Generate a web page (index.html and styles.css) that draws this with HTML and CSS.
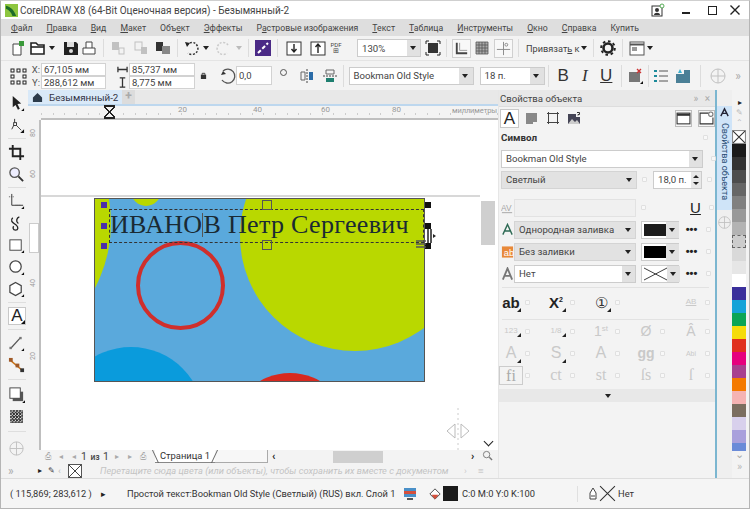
FILE: index.html
```html
<!DOCTYPE html>
<html lang="ru">
<head>
<meta charset="utf-8">
<title>CorelDRAW X8</title>
<link rel="stylesheet" href="styles.css">
</head>
<body>
<div class="app">
  <header class="titlebar">
    <svg class="logo" viewBox="0 0 14 14"><rect width="14" height="14" fill="#8dc63f"/><path d="M1 2C6 3 10 7 12 13L8 13C7 9 4 6 1 5Z" fill="#1d6b2a"/></svg>
    <span class="title">CorelDRAW X8 (64-Bit Оценочная версия) - Безымянный-2</span>
    <div class="winbtns">
      <svg class="w14" viewBox="0 0 14 14"><rect x="1" y="3" width="10" height="10" fill="none" stroke="#333"/><circle cx="6" cy="7" r="2" fill="#333"/><path d="M3 12c0-3 6-3 6 0z" fill="#333"/><circle cx="11" cy="3" r="2" fill="#fff" stroke="#5a5"/></svg>
      <span class="wmin"></span>
      <span class="wmax"></span>
      <svg class="wclose" viewBox="0 0 10 10"><path d="M0.5 0.5L9.5 9.5M9.5 0.5L0.5 9.5" stroke="#222" stroke-width="1.4"/></svg>
    </div>
  </header>

  <nav class="menubar">
    <span><u>Ф</u>айл</span><span><u>П</u>равка</span><span><u>В</u>ид</span><span><u>М</u>акет</span><span>Объ<u>е</u>кт</span><span><u>Э</u>ффекты</span><span>Р<u>а</u>стровые изображения</span><span><u>Т</u>екст</span><span><u>Т</u>аблица</span><span><u>И</u>нструменты</span><span><u>О</u>кно</span><span><u>С</u>правка</span><span>Купить</span>
  </nav>

  <div class="toolbar">
    <svg class="ic" viewBox="0 0 18 18"><path d="M4 16V5h8v11z" fill="#fff" stroke="#444"/><rect x="10" y="2" width="5" height="5" fill="#3a9a3a"/></svg>
    <svg class="ic m2" viewBox="0 0 18 18"><path d="M2 15V4h5l2 2h6v9z" fill="#fff" stroke="#222" stroke-width="1.6"/><path d="M2 8h13" stroke="#222" stroke-width="1.6"/></svg>
    <span class="arr"></span>
    <svg class="ic m6" viewBox="0 0 18 18"><path d="M2 3h12l2 2v11H2z" fill="#222"/><rect x="5" y="3" width="7" height="5" fill="#ddd"/><circle cx="9" cy="12" r="2" fill="#ddd"/></svg>
    <svg class="ic" viewBox="0 0 18 18"><path d="M6 9V3h6v6M3 9h12v6H3z" fill="#fff" stroke="#444"/></svg>
    <i class="sep s12"></i>
    <svg class="ic faded" viewBox="0 0 18 18"><rect x="3" y="3" width="7" height="8" fill="#999"/><rect x="10" y="9" width="5" height="6" fill="none" stroke="#999"/></svg>
    <svg class="ic faded m5" viewBox="0 0 18 18"><rect x="3" y="3" width="7" height="8" fill="none" stroke="#999"/><rect x="9" y="8" width="6" height="7" fill="#999"/></svg>
    <svg class="ic m4" viewBox="0 0 18 18"><rect x="2" y="3" width="7" height="9" fill="#333"/><rect x="8" y="7" width="8" height="8" fill="#888"/></svg>
    <i class="sep s7"></i>
    <svg class="ic" viewBox="0 0 18 18"><path d="M4 6a6 6 0 1 1 1 8" fill="none" stroke="#333" stroke-width="1.5" stroke-dasharray="2 1.5"/><path d="M2 3l5 1-3 4z" fill="#222"/></svg>
    <span class="arr m2"></span>
    <svg class="ic faded m4" viewBox="0 0 18 18"><path d="M14 6a6 6 0 1 0-1 8" fill="none" stroke="#aaa" stroke-width="1.5" stroke-dasharray="2 1.5"/></svg>
    <span class="arr m4 lite"></span>
    <i class="sep s7"></i>
    <svg class="ic" viewBox="0 0 18 18"><rect x="1" y="1" width="16" height="16" fill="#4a2a86"/><path d="M4 14L14 4" stroke="#fff" stroke-width="2" stroke-dasharray="4 2"/></svg>
    <i class="sep s7"></i>
    <svg class="ic m2" viewBox="0 0 18 18"><rect x="2" y="3" width="14" height="13" fill="#fff" stroke="#333"/><path d="M9 5v8M6.5 10L9 13l2.5-3" fill="none" stroke="#222" stroke-width="1.4"/></svg>
    <svg class="ic m6" viewBox="0 0 18 18"><rect x="2" y="3" width="14" height="13" fill="#fff" stroke="#333"/><path d="M9 14V6M6.5 8L9 5l2.5 3" fill="none" stroke="#222" stroke-width="1.4"/></svg>
    <span class="pdf m3">PDF<b>⊞</b></span>
    <div class="combo zoomc"><span>130%</span><span class="drop"></span></div>
    <svg class="ic m3" viewBox="0 0 18 18"><path d="M2 5V2h3M13 2h3v3M16 13v3h-3M5 16H2v-3" fill="none" stroke="#222"/><rect x="4" y="4" width="10" height="10" fill="#333"/></svg>
    <i class="sep snapl"></i>
    <span class="tbox"><svg viewBox="0 0 18 18"><path d="M4 3v11h11" fill="none" stroke="#444" stroke-width="2"/><path d="M7 3v8h8" fill="none" stroke="#999"/></svg></span>
    <svg class="ic m2" viewBox="0 0 18 18"><path d="M3 3h12v12H3zM3 6h12M3 9h12M3 12h12M6 3v12M9 3v12M12 3v12" fill="#aaa" stroke="#555" stroke-width=".8"/></svg>
    <span class="tbox m3"><svg viewBox="0 0 18 18"><path d="M9 2v14M2 10h14" stroke="#888"/><circle cx="12" cy="5" r="1.5" fill="none" stroke="#888"/></svg></span>
    <i class="sep s5"></i>
    <span class="snap">Привязат<u>ь</u> к</span>
    <span class="arr m1"></span>
    <i class="sep snapr"></i>
    <svg class="ic" viewBox="0 0 18 18"><circle cx="9" cy="9" r="4.5" fill="none" stroke="#222" stroke-width="2.6"/><circle cx="9" cy="9" r="6.8" fill="none" stroke="#222" stroke-width="2" stroke-dasharray="2.6 2.7"/></svg>
    <i class="sep s5"></i>
    <svg class="ic" viewBox="0 0 18 18"><rect x="2" y="3" width="14" height="13" fill="#fff" stroke="#555"/><path d="M2 5.5h14" stroke="#555" stroke-width="2"/><rect x="4" y="8" width="5" height="4" fill="#999"/></svg>
    <span class="arr m1"></span>
  </div>

  <div class="propbar">
    <svg class="ic" viewBox="0 0 18 18"><g fill="#fff" stroke="#222"><rect x="2" y="2" width="3" height="3"/><rect x="8" y="2" width="3" height="3"/><rect x="14" y="2" width="3" height="3"/><rect x="2" y="8" width="3" height="3"/><rect x="14" y="8" width="3" height="3"/><rect x="2" y="14" width="3" height="3"/><rect x="8" y="14" width="3" height="3"/><rect x="14" y="14" width="3" height="3"/></g></svg>
    <div class="xy"><div class="xyrow"><label>X:</label><span class="field">67,105 мм</span></div><div class="xyrow"><label>Y:</label><span class="field">288,612 мм</span></div></div>
    <div class="wh"><div class="xyrow"><svg class="mini" viewBox="0 0 12 12"><path d="M1 6h10M1 3v6M11 3v6" stroke="#333" stroke-width="1.4"/></svg><span class="field">85,737 мм</span></div><div class="xyrow"><svg class="mini" viewBox="0 0 12 12"><path d="M6 1v10M3 1h6M3 11h6" stroke="#333" stroke-width="1.4"/></svg><span class="field">8,775 мм</span></div></div>
    <svg class="lock" viewBox="0 0 8 8"><rect x="1" y="3" width="6" height="5" fill="#333"/><path d="M2.5 3V1.5h3V3" fill="none" stroke="#333"/></svg>
    <svg class="ic rot" viewBox="0 0 18 18"><path d="M5 4a7 7 0 1 1-1 9" fill="none" stroke="#555" stroke-width="1.3"/><path d="M3 8l5-1-3-3z" fill="#333"/></svg>
    <span class="field angle">0,0</span>
    <span class="deg"></span>
    <svg class="ic mir1" viewBox="0 0 18 18"><path d="M9 2v14" stroke="#444" stroke-dasharray="2 1"/><path d="M7 5H3v8h4z" fill="none" stroke="#666"/><path d="M11 5h4v8h-4z" fill="#2b6ca8"/></svg>
    <svg class="ic m5" viewBox="0 0 18 18"><path d="M2 9h14" stroke="#444" stroke-dasharray="2 1"/><path d="M5 7V3h8v4z" fill="none" stroke="#666"/><path d="M5 11v4h8v-4z" fill="#1f7f70"/></svg>
    <i class="sep s45 tall"></i>
    <div class="combo fontc"><span>Bookman Old Style</span><span class="drop"></span></div>
    <div class="combo sizec"><span>18 п.</span><span class="drop"></span></div>
    <i class="sep sbig tall"></i>
    <span class="big">B</span><span class="big it">I</span><span class="big un">U</span>
    <i class="sep s4 tall"></i>
    <svg class="ic" viewBox="0 0 18 18"><rect x="3" y="5" width="11" height="10" fill="#777"/><path d="M11 2l4 4M15 2l-4 4" stroke="#c33" stroke-width="1.3"/><path d="M17 17l-3 0 3-3z" fill="#111"/></svg>
    <i class="sep s35 tall"></i>
    <svg class="ic" viewBox="0 0 18 18"><path d="M7 4h9M7 9h9M7 14h9" stroke="#555"/><path d="M2 4h3M2 9h3M2 14h3" stroke="#1b8a9a" stroke-width="2"/></svg>
    <svg class="ic m4" viewBox="0 0 18 18"><rect x="2" y="7" width="14" height="9" fill="#4a7f96"/><rect x="10" y="3" width="6" height="5" fill="#4a7f96"/><path d="M4 6l2-4 2 4" fill="#3ab0d0"/></svg>
    <i class="sep s8 tall"></i>
    <svg class="ic faded" viewBox="0 0 18 18"><circle cx="9" cy="9" r="7" fill="none" stroke="#999"/><path d="M9 2v14M2 9h14" stroke="#999"/></svg>
    <span class="more">»</span>
  </div>

  <div class="main">
    <aside class="toolbox">
      <svg class="tool" viewBox="0 0 18 18"><path d="M5 1l9 8-4 .5 2.5 5-2 1-2.5-5L5 13z" fill="#222"/><path d="M17 17h-3l3-3z" fill="#111"/></svg>
      <svg class="tool" viewBox="0 0 18 18"><path d="M7 2v5l-3 6" fill="none" stroke="#333"/><rect x="6" y="6" width="3" height="3" fill="#fff" stroke="#333"/><path d="M9 9l5 5" stroke="#444"/><path d="M17 17h-4l4-4z" fill="#111"/></svg>
      <i class="hr"></i>
      <svg class="tool" viewBox="0 0 18 18"><path d="M5 1v12h12M1 5h12v12" fill="none" stroke="#222" stroke-width="2"/></svg>
      <svg class="tool" viewBox="0 0 18 18"><circle cx="7" cy="7" r="5" fill="#eef" stroke="#555" stroke-width="1.4"/><path d="M11 11l5 5" stroke="#333" stroke-width="2"/></svg>
      <i class="hr"></i>
      <svg class="tool" viewBox="0 0 18 18"><path d="M4 1v12h12" fill="none" stroke="#333"/><path d="M1 4h6M8 13h6" stroke="#555" stroke-dasharray="1 1"/><path d="M17 17h-3l3-3z" fill="#111"/></svg>
      <svg class="tool" viewBox="0 0 18 18"><path d="M5 3c-4 4 2 6 4 8s2 5-1 5-3-3-2-4M12 2c-3 1-4 5-1 7" fill="none" stroke="#222" stroke-width="1.4"/></svg>
      <svg class="tool" viewBox="0 0 18 18"><rect x="2" y="3" width="12" height="11" fill="#fff" stroke="#444"/><path d="M17 17h-3l3-3z" fill="#111"/></svg>
      <svg class="tool" viewBox="0 0 18 18"><circle cx="8" cy="8" r="6" fill="#fff" stroke="#444" stroke-width="1.3"/><path d="M17 17h-3l3-3z" fill="#111"/></svg>
      <svg class="tool" viewBox="0 0 18 18"><path d="M8 1.5l6 3.5v7l-6 3.5-6-3.5V5z" fill="#fff" stroke="#444" stroke-width="1.3"/><path d="M17 17h-3l3-3z" fill="#111"/></svg>
      <i class="hr"></i>
      <span class="tool sel">A<svg class="corner" viewBox="0 0 4 4"><path d="M4 4H0l4-4z" fill="#111"/></svg></span>
      <i class="hr"></i>
      <svg class="tool" viewBox="0 0 18 18"><path d="M3 14L13 3" stroke="#555" stroke-width="1.3"/><rect x="1.500" y="12.500" width="2.500" height="2.500" fill="#777"/><rect x="12" y="2" width="2.500" height="2.500" fill="#777"/><path d="M17 17h-3l3-3z" fill="#111"/></svg>
      <svg class="tool" viewBox="0 0 18 18"><path d="M2 3l13 11" stroke="#c8741a" stroke-width="1.6"/><rect x="1" y="1" width="4" height="4" fill="#a05a28"/><rect x="8" y="7" width="4" height="4" fill="#a05a28"/><rect x="13" y="12" width="4" height="4" fill="#333"/></svg>
      <i class="hr wide-hr"></i>
      <svg class="tool" viewBox="0 0 18 18"><rect x="5" y="6" width="11" height="10" fill="#555"/><rect x="2" y="2" width="11" height="11" fill="#fff" stroke="#444"/><path d="M18 18h-3l3-3z" fill="#111"/></svg>
      <svg class="tool" viewBox="0 0 16 16"><rect x="2" y="2" width="12" height="12" fill="#333"/><path d="M2 4h12M2 7h12M2 10h12M2 13h12M4 2v12M7 2v12M10 2v12M13 2v12" stroke="#ddd" stroke-dasharray="1.500 1.500"/></svg>
      <i class="hr gapt"></i>
      <svg class="tool faded addt" viewBox="0 0 18 18"><circle cx="9" cy="9" r="7" fill="none" stroke="#999"/><path d="M9 2v14M2 9h14" stroke="#999"/></svg>
      <span class="more left">»</span>
    </aside>

    <section class="work">
      <div class="tabs">
        <span class="tab"><svg class="home" viewBox="0 0 12 12"><path d="M6 1l5 5v5H1V6z" fill="#2b3a4a"/></svg>Безымянный-2</span>
        <span class="tabadd">+</span>
      </div>
      <div class="rulertop">
        <span class="corner-r"></span>
        <div class="hruler">
          <span class="mark hour"></span>
          <span class="rnum n1">20</span><span class="rnum n2">40</span><span class="rnum n3">60</span><span class="rnum n4">80</span><span class="units">миллиметры</span>
        </div>
      </div>
      <div class="stage">
        <div class="vruler"><span class="vnum v1">80</span><span class="vnum v2">60</span><span class="vnum v3">40</span><span class="vnum v4">20</span><span class="vthumb"></span></div>
        <div class="canvas">
          <i class="guide"></i>
          <div class="page">
            <i class="c lime-big"></i><i class="c lime-left"></i><i class="c lime-small"></i><i class="c ring"></i><i class="c blue"></i><i class="c red"></i>
          </div>
          <div class="frame"><span class="fio">ИВАНО<span class="caret"></span>В Петр Сергеевич</span></div>
          <i class="h p1"></i><i class="h p2"></i><i class="h p3"></i>
          <i class="h k1"></i><i class="h k2"></i><i class="h k3"></i>
          <i class="h o1"></i><i class="h o2"></i>
          <svg class="cur" viewBox="0 0 20 20"><path d="M0 12h10M0 15h10M0 18h10" stroke="#555" stroke-width="1.500"/><path d="M12 0v14M15 0v14" stroke="#222" stroke-width="1.500"/><path d="M17 5l3 2-3 2z" fill="#222"/></svg>
          <svg class="hint" viewBox="0 0 26 46"><path d="M13 0v46" stroke="#ccc" stroke-dasharray="2 3"/><path d="M10 16l-8 7 8 7zM16 16l8 7-8 7z" fill="#fff" stroke="#bbb"/></svg>
          <div class="vscroll"><span class="vsth"></span><span class="vsdown"></span></div>
        </div>
      </div>
      <div class="pagenav">
        <div class="nav">
          <span class="nv">⎙</span><span class="nv">◂</span><span class="nv">◂</span><span class="num">1</span><span class="iz">из</span><span class="num">1</span><span class="nv">▸</span><span class="nv">▸</span><span class="nv">⎙</span>
        </div>
        <span class="pagetab">Страница 1</span>
        <span class="blanktab"></span>
        <span class="hsl">‹</span>
        <span class="hsth"></span>
        <span class="hsr">›</span>
        <svg class="zm" viewBox="0 0 12 12"><circle cx="5" cy="5" r="3.500" fill="none" stroke="#777"/><path d="M8 8l3 3" stroke="#777" stroke-width="1.500"/></svg>
      </div>
      <div class="colorstrip">
        <span class="cs-ar">▸</span><span class="cs-pen">✎</span><span class="cs-l">‹</span>
        <svg class="nofill" viewBox="0 0 14 14"><rect x=".5" y=".5" width="13" height="13" fill="#fff" stroke="#555"/><path d="M1 1l12 12M13 1L1 13" stroke="#444"/></svg>
        <em>Перетащите сюда цвета (или объекты), чтобы сохранить их вместе с документом</em>
        <span class="cs-r">›</span><span class="cs-s">≡</span>
      </div>
    </section>

    <section class="docker">
      <div class="dhead"><span>Свойства объекта</span><span class="dctrl">» ×</span></div>
      <div class="dtabs">
        <span class="dt on">A</span>
        <svg class="dti" viewBox="0 0 14 14"><path d="M1 2h11v9H8v2H1z" fill="#888"/></svg>
        <svg class="dti" viewBox="0 0 14 14"><path d="M2.500 1v12M11.500 1v12M1 2.500h12M1 11.500h12" stroke="#444"/></svg>
        <svg class="dti" viewBox="0 0 14 14"><rect x="1" y="3" width="12" height="10" fill="#445"/><path d="M1 13l4-5 3 3 2-2 3 4z" fill="#ccc"/><rect x="9" y="0" width="5" height="6" fill="#f2f2f2"/><path d="M10 1.500h2.500v2H11v1" fill="none" stroke="#333"/></svg>
        <span class="spacer"></span>
        <span class="dbox"><svg viewBox="0 0 14 14"><rect x="1" y="2" width="12" height="10" fill="#fff" stroke="#333"/><path d="M1 3.500h12" stroke="#333" stroke-width="2"/></svg></span>
        <span class="dbox"><svg viewBox="0 0 14 14"><path d="M9 2H1v10h12V6" fill="#fff" stroke="#333"/><circle cx="11" cy="3" r="2" fill="#fff" stroke="#777"/></svg></span>
      </div>
      <div class="dsec"><b>Символ</b><i class="chk"></i></div>
      <div class="drow first">
        <div class="combo wide"><span>Bookman Old Style</span><span class="drop"></span></div><i class="chk"></i>
      </div>
      <div class="drow">
        <div class="combo flat w136"><span>Светлый</span><span class="drop pl"></span></div><i class="chk"></i>
        <div class="combo w50"><span>18,0 п.</span><span class="spin"></span></div><i class="chk"></i>
      </div>
      <div class="drow kern">
        <svg class="lead faded" viewBox="0 0 14 14"><text x="0" y="10" font-size="9" font-family="Liberation Sans" fill="#666">AV</text><path d="M1 12h11" stroke="#666"/></svg>
        <div class="combo dis w121"></div><i class="chk"></i>
        <span class="under"><u>U</u></span><i class="chk"></i>
      </div>
      <div class="drow fillr">
        <svg class="lead" viewBox="0 0 14 14"><path d="M2 12L7 1l5 11M4 8h6" fill="none" stroke="#2f6b55" stroke-width="1.500"/></svg>
        <div class="combo flat w121"><span>Однородная заливка</span><span class="drop pl"></span></div>
        <div class="swb"><i class="blk"></i><span class="drop"></span></div><span class="dots">•••</span><i class="chk"></i>
      </div>
      <div class="drow fillr">
        <svg class="lead" viewBox="0 0 14 14"><rect x="1" y="1" width="12" height="12" fill="#e8893a"/><text x="3" y="11" font-size="10" font-family="Liberation Sans" fill="#fff">ab</text></svg>
        <div class="combo flat w121"><span>Без заливки</span><span class="drop pl"></span></div>
        <div class="swb"><i class="blk k"></i><span class="drop"></span></div><span class="dots">•••</span><i class="chk"></i>
      </div>
      <div class="drow fillr">
        <svg class="lead" viewBox="0 0 14 14"><path d="M2 13L7 1l5 12M4 9h6" fill="none" stroke="#777" stroke-width="2"/></svg>
        <div class="combo w121"><span>Нет</span><span class="drop"></span></div>
        <div class="swb"><svg class="nox" viewBox="0 0 26 14" preserveAspectRatio="none"><path d="M0 1l26 12M26 1L0 13" stroke="#333"/></svg><span class="drop"></span></div><span class="dots">•••</span><i class="chk"></i>
      </div>
      <i class="dhr"></i>
      <div class="grow one">
        <span class="g dark ab">ab<s class="cn"></s></span><i class="chk"></i>
        <span class="g dark x2">X<sup>2</sup><s class="cn"></s></span><i class="chk"></i>
        <span class="g circ">①<s class="cn"></s></span><i class="chk"></i>
        <span class="g"></span><i class="nochk"></i>
        <span class="g lt sm"><u>AB</u></span><i class="chk"></i>
      </div>
      <i class="dhr"></i>
      <div class="grow">
        <span class="g lt sm">123<s class="cn"></s></span><i class="chk"></i>
        <span class="g lt sm">1/8<s class="cn"></s></span><i class="chk"></i>
        <span class="g lt">1<sup>st</sup></span><i class="chk"></i>
        <span class="g lt">Ø</span><i class="chk"></i>
        <span class="g lt">Â</span><i class="chk"></i>
      </div>
      <div class="grow">
        <span class="g lt bigg">A<s class="cn"></s></span><i class="chk"></i>
        <span class="g lt bigg">S<s class="cn"></s></span><i class="chk"></i>
        <span class="g lt bigg mir">A</span><i class="chk"></i>
        <span class="g lt bold">gg</span><i class="chk"></i>
        <span class="g lt xs">Abi</span><i class="chk"></i>
      </div>
      <div class="grow">
        <span class="g lt lig boxed">fi</span><i class="chk"></i>
        <span class="g lt lig">ct</span><i class="chk"></i>
        <span class="g lt lig">st</span><i class="chk"></i>
        <span class="g lt lig">ſs</span><i class="chk"></i>
        <span class="g lt lig">ſ</span><i class="chk"></i>
      </div>
      <div class="dmore"><span class="arr"></span></div>
    </section>

    <div class="sidetab">
      <span class="vtab"><svg class="vico" viewBox="0 0 12 12"><path d="M2 10l4-8 4 8M4 7h4" fill="none" stroke="#223" stroke-width="1.500"/></svg><span class="vtxt">Свойства объекта</span></span>
      <svg class="addv faded" viewBox="0 0 18 18"><circle cx="9" cy="9" r="7" fill="none" stroke="#999"/><path d="M9 2v14M2 9h14" stroke="#999"/></svg>
    </div>

    <div class="palette">
      <span class="pal-a">▸</span><span class="pal-b">✎</span><span class="pal-c">⌃</span>
      <svg class="pal-x" viewBox="0 0 13 13"><rect x=".5" y=".5" width="12" height="12" fill="#fff" stroke="#888"/><path d="M1 1l11 11M12 1L1 12" stroke="#333"/></svg>
      <div class="swatches">
        <i class="sw s1"></i><i class="sw s2"></i><i class="sw s3"></i><i class="sw s4x"></i><i class="sw s5x"></i><i class="sw s6x"></i><i class="sw s7x"></i><i class="sw s8x"></i><i class="sw s9x"></i><i class="sw s10x"></i><i class="sw s11x"></i><i class="sw s12x"></i><i class="sw s13x"></i><i class="sw s14x"></i><i class="sw s15x"></i><i class="sw s16x"></i><i class="sw s17x"></i><i class="sw s18x"></i><i class="sw s19x"></i><i class="sw s20x"></i><i class="sw s21x"></i><i class="sw s22x"></i><i class="sw s23x"></i><i class="sw s24x"></i>
      </div>
      <span class="pal-d">⌄</span><span class="pal-e">»</span>
    </div>
  </div>

  <footer class="status">
    <span class="st-coord">( 115,869; 283,612 )</span>
    <span class="st-ar">▸</span>
    <span class="st-txt">Простой текст:Bookman Old Style (Светлый) (RUS) вкл. Слой 1</span>
    <svg class="st-mon" viewBox="0 0 14 14"><rect x="1" y="1" width="12" height="9" fill="#4a90c8"/><rect x="1" y="4" width="12" height="3" fill="#d6503c"/><path d="M4 12h6" stroke="#555" stroke-width="2"/></svg>
    <svg class="st-fill" viewBox="0 0 14 14"><path d="M7 1l6 6-6 6-6-6z" fill="#fff" stroke="#333"/><path d="M3 8h8l-4 5z" fill="#d6503c"/></svg>
    <i class="st-sw"></i>
    <span class="st-cmyk">C:0 M:0 Y:0 K:100</span>
    <i class="st-sep"></i>
    <svg class="st-pen" viewBox="0 0 8 14"><path d="M4 1l3 5v6H1V6z" fill="#fff" stroke="#444"/><path d="M2 9h4" stroke="#444"/></svg>
    <svg class="st-x" viewBox="0 0 16 16"><path d="M1 1l14 14M15 1L1 15" stroke="#333"/></svg>
    <span class="st-none">Нет</span>
  </footer>
</div>
</body>
</html>
```
FILE: styles.css
```css
*{box-sizing:border-box}
html,body{margin:0;height:100%;overflow:hidden}
body{width:750px;height:509px;font-family:Roboto,"Open Sans",sans-serif;font-size:9.500px;color:#333;background:#f3f3f3}
i,s,em{font-style:normal;text-decoration:none}
.app{width:750px;height:509px;display:flex;flex-direction:column;border:1px solid #b5b5b5;border-top-color:#cfcfcf}

.titlebar{height:18px;display:flex;align-items:center;background:#fff;padding-left:4px;flex:none}
.logo{width:13px;height:13px;margin-right:2px}
.title{font-size:10px;color:#444;white-space:nowrap}
.winbtns{margin-left:auto;display:flex;align-items:center;height:18px}
.w14{width:14px;height:14px}
.wmin{width:8px;height:2px;background:#222;margin:6px 0 0 17px}
.wmax{width:9px;height:9px;border:1.500px solid #222;margin-left:18px}
.wclose{width:10px;height:10px;margin:0 9px 0 13px}

.menubar{height:17px;background:#dedede;display:flex;align-items:center;padding-left:10px;gap:14px;font-size:8.700px;color:#444;flex:none;white-space:nowrap}

.toolbar{height:24px;background:#f3f3f3;display:flex;align-items:center;padding-left:8px;flex:none;white-space:nowrap}
.propbar{height:30px;background:#f3f3f3;display:flex;align-items:center;padding-left:8px;flex:none;border-top:1px solid #e4e4e4;white-space:nowrap;overflow:hidden}
.ic{width:18px;height:18px;flex:none}
.faded{opacity:.55}
.arr{width:0;height:0;border-left:3.500px solid transparent;border-right:3.500px solid transparent;border-top:4px solid #222;margin-left:2px;margin-right:1px;flex:none}
.arr.lite{border-top-color:#bbb}
.m1{margin-left:1px}.m2{margin-left:2px}.m3{margin-left:3px}.m4{margin-left:4px}.m5{margin-left:5px}.m6{margin-left:6px}
.sep{width:1px;height:18px;background:#dcdcdc;flex:none}
.sep.tall{height:22px}
.s4{margin:0 4px}.s5{margin:0 5px}.s7{margin:0 5px}.s8{margin:0 8px}.s12{margin:0 5px}.s35{margin:0 3.500px}.s45{margin:0 4.500px}
.sbig{margin:0 4px 0 3px}
.snapl{margin:0 5px 0 4px}.snapr{margin:0 5px}
.pdf{font-size:6px;line-height:7px;width:12px;text-align:center;color:#444;flex:none;display:flex;flex-direction:column;align-items:center;margin-right:15px}
.pdf b{font-size:7px;font-weight:400}
.combo{display:flex;align-items:center;background:#fff;border:1px solid #ccc;height:17px;font-size:9.600px;color:#444;padding-left:4px;position:relative;flex:none}
.drop{margin-left:auto;width:13px;height:100%;background:#e1e1e1;position:relative;flex:none}
.drop::after{content:"";position:absolute;left:3px;top:6px;border-left:3.500px solid transparent;border-right:3.500px solid transparent;border-top:4px solid #222}
.drop.pl{background:transparent}
.zoomc{width:64px;height:18px}
.tbox{width:19px;height:19px;border:1px solid #d0d0d0;background:#f8f8f8;display:block;flex:none}
.tbox svg{width:17px;height:17px;display:block}
.snap{font-size:9.200px;color:#444;width:54px;margin-left:2px;flex:none}

.xy{width:75px;margin-left:4px;flex:none}
.wh{width:78px;margin-left:11px;flex:none}
.xyrow{display:flex;align-items:center;height:13px;gap:1px;font-size:9.500px;color:#555}
.xyrow label{width:9px;text-align:right;flex:none}
.mini{width:11px;height:11px;flex:none}
.field{flex:1;background:#fff;border:1px solid #d2d2d2;height:13px;line-height:11px;padding-left:2px;font-size:9.500px;color:#444;display:block}
.lock{width:7px;height:7px;margin-left:4.500px;flex:none}
.rot{margin-left:11.500px}
.angle{flex:none;width:36px;height:19px;line-height:17px}
.deg{width:7px;height:7px;border:1px solid #555;border-radius:50%;margin:0 0 6px 8px;flex:none}
.mir1{margin-left:10.500px}
.fontc{width:125px;height:18px}
.sizec{width:65px;height:18px;margin-left:6px}
.sizec .drop,.fontc .drop{width:14px}
.big{font:400 17px/1 "Liberation Sans",sans-serif;color:#333;width:21.500px;text-align:center;flex:none}
.it{font-style:italic;font-family:"Liberation Serif",serif}
.un{text-decoration:underline;text-decoration-thickness:1px}
.more{width:14px;text-align:center;color:#aaa;font-size:12px;margin-left:4px;flex:none}

.main{flex:1;display:flex;min-height:0;position:relative}
.toolbox{width:27px;flex:none;padding-left:7px;display:flex;flex-direction:column;align-items:flex-start;background:#f3f3f3}
.tool{width:17px;height:17px;margin-top:5px;flex:none;display:block}
.hr{width:18px;height:1px;background:#dedede;margin-top:4px;flex:none}
.wide-hr{margin-top:5px;margin-bottom:1px}
.gapt{margin-top:6px}
.tool.sel{width:18px;height:18px;border:1px solid #c8c8c8;background:#fff;font:400 17px/16px "Liberation Sans",sans-serif;text-align:center;color:#222;position:relative;margin-top:4px}
.corner{position:absolute;right:0;bottom:0;width:4px;height:4px}
.tool.addt{margin-top:8px}
.more.left{margin:7px 0 0 0;text-align:left}

.work{width:470px;flex:none;display:flex;flex-direction:column;min-width:0}
.tabs{height:16px;display:flex;align-items:stretch;background:#e8e8e8;border-bottom:2px solid #bdd7ee;flex:none}
.tab{width:94px;background:#d9e9f8;font-size:9.800px;color:#334;display:flex;align-items:center;gap:6px;padding-left:4px;white-space:nowrap}
.home{width:11px;height:11px}
.tabadd{width:13px;background:#dcdcdc;color:#aaa;font-weight:700;font-size:12px;line-height:12px;text-align:center}
.rulertop{height:14px;display:flex;flex:none;background:#f3f3f3}
.corner-r{width:13px}
.hruler{flex:1;position:relative;border-bottom:2px solid #bfbfbf;background:repeating-linear-gradient(90deg,#ccc 0 1px,transparent 1px 11.700px) 0 7px/100% 2px no-repeat}
.hour{position:absolute;left:63px;top:-1px;width:11px;height:14px;border-top:2px solid #222;border-bottom:2px solid #222;background:linear-gradient(45deg,transparent 46%,#222 46% 56%,transparent 56%),linear-gradient(-45deg,transparent 46%,#222 46% 56%,transparent 56%)}
.rnum{position:absolute;top:-1px;font-size:8px;color:#999}
.n1{left:137px}.n2{left:212px}.n3{left:280px}.n4{left:351px}
.units{position:absolute;right:1px;top:0;font-size:7.500px;color:#999;letter-spacing:-.1px}
.stage{flex:1;display:flex;min-height:0}
.vruler{width:13px;flex:none;position:relative;border-right:2px solid #bfbfbf;background:#f3f3f3}
.vnum{position:absolute;left:1px;font-size:7px;color:#999;transform:rotate(-90deg)}
.v1{top:9px}.v2{top:50px}.v3{top:159px}.v4{top:232px}
.vthumb{position:absolute;left:1px;top:103px;width:10px;height:30px;background:#fff;border:1px solid #ccc}
.canvas{flex:1;position:relative;background:#fff;overflow:hidden}
.guide{position:absolute;left:0;top:75px;width:439px;height:2px;background:#d8d8d8}
.page{position:absolute;left:53px;top:78px;width:331px;height:184px;background:#5aa9dc;border:1px solid #555;overflow:hidden}
.c{position:absolute;border-radius:50%;display:block}
.lime-big{left:145px;top:-78px;width:230px;height:230px;background:#b9d800}
.lime-left{left:-264px;top:-116px;width:280px;height:280px;background:#b9d800}
.lime-small{left:36px;top:-23px;width:30px;height:30px;background:#b9d800}
.ring{left:41px;top:42px;width:89px;height:89px;border:4px solid #cf2f2c}
.blue{left:-37px;top:148px;width:146px;height:146px;background:#0a9bdc}
.red{left:135px;top:174px;width:120px;height:120px;background:#d8291f}
.frame{position:absolute;left:68px;top:89px;width:315px;height:34px;border:1px dashed #333;padding:0 0 3px 0;display:flex;align-items:center}
.fio{font:400 26px/1 "Liberation Serif",serif;color:#1a2a33;white-space:nowrap;letter-spacing:.33px;position:relative}
.caret{display:inline-block;width:1px;height:24px;background:#555;vertical-align:-4px}
.h{position:absolute;width:6px;height:6px;display:block}
.p1,.p2,.p3{left:60px;background:#4b2fa8}
.p1{top:82px}.p2{top:103px}.p3{top:123px}
.k1,.k2,.k3{left:384px;background:#111}
.k1{top:82px}.k2{top:103px}.k3{top:123px}
.o1,.o2{left:221px;width:10px;height:10px;border:1.500px solid #555;background:transparent}
.o1{top:80px}.o2{top:120px}
.cur{position:absolute;left:375px;top:109px;width:20px;height:20px}
.hint{position:absolute;left:404px;top:288px;width:26px;height:46px}
.vscroll{position:absolute;right:0;top:0;bottom:0;width:16px}
.vsth{position:absolute;left:-1px;top:81px;width:14px;height:44px;background:#cfcfcf}
.vsdown{position:absolute;left:3px;top:318px;width:7px;height:7px;border:solid #222;border-width:0 1.500px 1.500px 0;transform:rotate(45deg)}
.pagenav{height:13px;display:flex;align-items:center;background:#f3f3f3;position:relative;flex:none;white-space:nowrap}
.nav{width:127px;padding-left:13px;display:flex;align-items:center;flex:none}
.nv{width:13px;text-align:center;font-size:8px;color:#aaa;flex:none}
.num{width:8px;text-align:center;font-size:10.500px;color:#444;flex:none}
.iz{width:14px;text-align:center;font-size:8.500px;color:#444;font-weight:500;flex:none}
.pagetab{width:60px;height:13px;background:#fff;text-align:center;font-size:9.400px;line-height:12px;color:#333;flex:none;border-bottom:1px solid #888;position:relative}
.pagetab::before,.pagetab::after{content:"";position:absolute;top:0;height:13px;width:1px;background:#666}
.pagetab::before{left:0;transform:skewX(25deg)}
.pagetab::after{right:0;transform:skewX(-25deg)}
.blanktab{width:53px;height:13px;border-bottom:1px solid #aaa;border-right:1px solid #aaa;background:#f7f7f7;flex:none}
.hsl{width:65px;padding-left:4px;font-weight:700;font-size:11px;line-height:12px;color:#222;flex:none}
.hsth{width:50px;height:12px;background:#cfcfcf;flex:none}
.hsr{margin-left:88px;font-weight:700;font-size:11px;line-height:12px;color:#222;flex:none}
.zm{position:absolute;right:5px;top:0;width:11px;height:11px}
.colorstrip{height:15px;display:flex;align-items:center;background:#f3f3f3;color:#ccc;flex:none;white-space:nowrap;padding-left:10px;position:relative;overflow:hidden}
.cs-ar{font-size:8px;color:#222;width:10px;flex:none}
.cs-pen{font-size:8px;color:#444;width:10px;flex:none}
.cs-l{width:10px;color:#bbb;flex:none}
.nofill{width:14px;height:14px;flex:none;margin-right:18px}
.colorstrip em{font-style:italic;width:358px;overflow:hidden;color:#c4c4c4;font-size:9.300px;flex:none}
.cs-r{margin-left:6px;color:#ccc;width:14px;flex:none}
.cs-s{color:#ccc;flex:none}

.docker{width:219px;flex:none;background:#f3f3f3;border-left:1px solid #e6e6e6;border-right:2px solid #7bb6d0;display:flex;flex-direction:column;position:relative}
.dhead{height:16px;display:flex;align-items:center;justify-content:space-between;background:#e8e8e8;padding:0 3px 0 1px;font-size:9.600px;color:#444;flex:none}
.dctrl{color:#aaa;font-size:10px;letter-spacing:2px}
.dtabs{height:23px;display:flex;align-items:center;gap:6px;padding-left:1px;flex:none;border-top:1px solid #ddd}
.dt{width:19px;height:19px;border:1px solid #c8c8c8;background:#fff;font:400 17px/17px "Liberation Sans",sans-serif;color:#222;text-align:center;flex:none}
.dti{width:14px;height:14px;flex:none;margin-right:1px}
.dbox{width:17px;height:17px;border:1px solid #bbb;background:#f6f6f6;flex:none;display:block}
.dbox svg{width:15px;height:15px;display:block}
.spacer{flex:1}
.dsec{height:14px;display:flex;align-items:center;justify-content:space-between;padding-left:2px;font-size:9.800px;color:#333;flex:none;margin-top:1px}
.chk{width:5px;height:5px;border:1px solid #e0e0e0;background:#f8f8f8;flex:none;display:block;border-radius:1px}
.nochk{width:5px;flex:none}
.dsec .chk{margin-right:7px}
.drow{height:17px;margin-top:4px;padding-left:2px;display:flex;align-items:center;flex:none;gap:5px}
.drow.first{margin-top:6px}
.wide{width:202px;margin-right:3px;height:18px}
.w136{width:136px;height:18px}
.w50{width:49px;height:18px;margin-left:1px}
.w121{width:122px;height:18px}
.flat{background:#e2e2e2;border-color:#d4d4d4}
.dis{background:#f0f0f0;border-color:#e2e2e2}
.spin{margin-left:auto;width:10px;height:100%;background:#e8e8e8;position:relative;flex:none}
.spin::before{content:"";position:absolute;left:2px;top:3px;border-left:3px solid transparent;border-right:3px solid transparent;border-bottom:3px solid #222}
.spin::after{content:"";position:absolute;left:2px;bottom:3px;border-left:3px solid transparent;border-right:3px solid transparent;border-top:3px solid #222}
.lead{width:13px;height:14px;flex:none;margin-right:-5px}
.kern{margin-top:11px}
.under{font:400 15px/1 "Liberation Sans",sans-serif;color:#222;width:17px;margin-left:36px;text-align:center}
.fillr{gap:5px;margin-top:5px}
.swb{width:38px;height:18px;border:1px solid #ccc;background:#fff;display:flex;align-items:center;padding-left:2px;flex:none}
.blk{width:22px;height:12px;background:#1c1c1c;display:block;flex:none}
.blk.k{background:#000}
.nox{width:23px;height:14px;flex:none}
.dots{font:700 11px/1 "Liberation Sans",sans-serif;color:#222;width:15px;text-align:center}
.fillr .chk{margin-left:2px}
.dhr{height:1px;background:#e2e2e2;margin:5px 6px 0 3px;display:block;flex:none}
.grow{height:22px;display:flex;align-items:center;flex:none}
.grow.one{height:24px;margin-top:2px}
.g{width:24px;text-align:center;font:400 14px/1 "Liberation Sans",sans-serif;color:#333;position:relative;flex:none;white-space:nowrap;margin-right:2px}
.grow .chk,.grow .nochk{margin-right:14px}
.dark{font-weight:700;color:#222;font-size:15px}
.x2 sup{font-size:7px;vertical-align:6px;line-height:0}
.circ{font-size:15px}
.lt{color:#c9c9c9}
.sm{font-size:8px}
.xs{font-size:7px}
.bigg{font-size:16px}
.bold{font-weight:700}
.mir{transform:scaleX(-1)}
.lig{font-size:16px;font-family:"Liberation Serif",serif}
.boxed{border:1px solid #ccc;height:19px;line-height:17px;color:#aaa}
.cn{position:absolute;right:2px;bottom:-2px;border-left:4px solid transparent;border-bottom:4px solid #222;width:0;height:0}
.lt sup{font-size:8px;vertical-align:5px;line-height:0}
.dmore{height:13px;background:#e8e8e8;display:flex;align-items:center;justify-content:center;margin-top:3px;flex:none}

.sidetab{width:15px;flex:none;position:relative;background:#efefef;padding-top:16px}
.vtab{display:flex;flex-direction:column;align-items:center;width:15px;height:104px;background:#cfe4f8;padding-top:1px;gap:5px}
.vico{width:11px;height:11px;flex:none}
.vtxt{writing-mode:vertical-rl;font-size:9px;color:#1f4a72;white-space:nowrap;line-height:15px}
.addv{position:absolute;left:0;top:125px;width:15px;height:15px}
.palette{width:17px;flex:none;background:#f3f3f3;position:relative}
.palette span{position:absolute;left:1px;width:13px;text-align:center;font-size:8px;line-height:10px;color:#bbb}
.palette .pal-a{top:8px;color:#222}
.palette .pal-b{top:18px}
.palette .pal-c{top:28px}
.pal-x{position:absolute;left:0;top:40px;width:14px;height:14px}
.swatches{position:absolute;left:0;top:54px;width:14px;display:flex;flex-direction:column}
.sw{display:block;height:13px;width:14px}
.s1{background:#1a1a1a}.s2{background:#333}.s3{background:#4d4d4d}.s4x{background:#666}.s5x{background:#808080}.s6x{background:#999}.s7x{background:#b3b3b3}.s8x{background:#ccc;border:1px dashed #666}.s9x{background:#d9d9d9}.s10x{background:#e6e6e6}.s11x{background:#fff}.s12x{background:#3a2f9b}.s13x{background:#14a3d8}.s14x{background:#0aa555}.s15x{background:#f5dc0a}.s16x{background:#e0301e}.s17x{background:#e6007e}.s18x{background:#a8408f}.s19x{background:#f47a00}.s20x{background:#f5b3b3}.s21x{background:#7b6e60}.s22x{background:#d8d0ec}.s23x{background:#a9a0dc}.s24x{background:#6a8bd8;height:8px}
.palette .pal-d{top:360px;font-size:11px;color:#aaa}
.palette .pal-e{top:372px;font-size:11px;color:#bbb}

.status{height:30px;background:#f5f5f5;display:flex;align-items:center;flex:none;border-top:1px solid #ddd;padding-left:9px;font-size:9.300px;color:#333;white-space:nowrap}
.st-coord{width:91px;flex:none}
.st-ar{font-size:9px;color:#222;width:26px;flex:none}
.st-txt{width:276px;flex:none}
.st-mon{width:14px;height:14px;flex:none}
.st-fill{width:12px;height:14px;margin-left:12px;margin-right:2px;flex:none}
.st-sw{width:15px;height:15px;background:#1a1a1a;flex:none}
.st-cmyk{margin-left:4px;width:115px;flex:none}
.st-sep{width:1px;height:16px;background:#e0e0e0;flex:none}
.st-pen{width:8px;height:14px;margin-left:11px;flex:none}
.st-x{width:17px;height:17px;margin-left:2px;flex:none}
.st-none{margin-left:2px}
```
